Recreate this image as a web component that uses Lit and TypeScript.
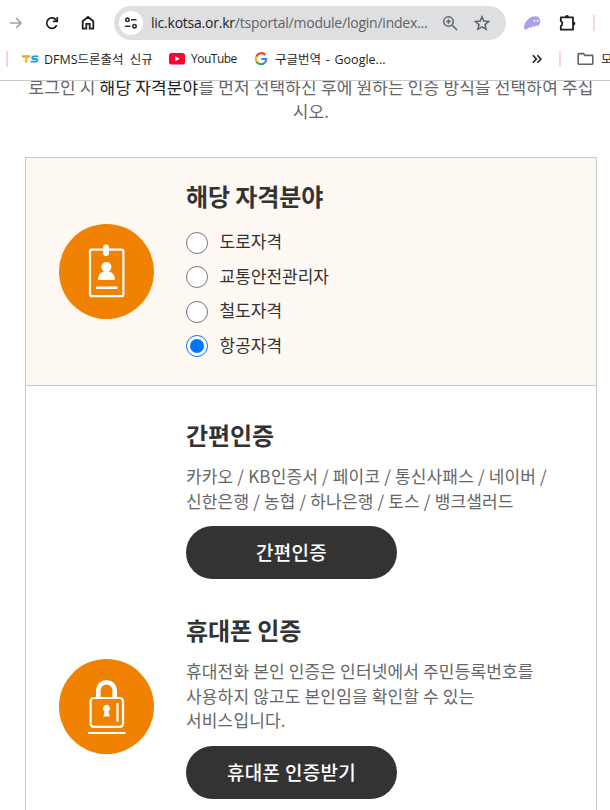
import { LitElement, css, html, svg } from "lit";
import { customElement, property, state } from "lit/decorators.js";

@customElement("browser-bar")
export class BrowserBar extends LitElement {
  static styles = css`
    :host {
      display: block;
      height: 80px;
      flex: none;
      background: #fff;
      border-bottom: 1px solid #c8c9cb;
      font-family: "Open Sans", "Noto Sans CJK KR", sans-serif;
      color: #1f1f1f;
      overflow: hidden;
    }

    svg {
      display: block;
      flex: none;
    }

    .toolbar {
      display: flex;
      align-items: center;
      height: 34px;
      padding: 6px 0 0 6px;
    }

    .forward {
      margin-right: 18px;
    }

    .reload {
      margin-right: 16px;
    }

    .address {
      display: flex;
      align-items: center;
      flex: none;
      box-sizing: border-box;
      width: 392px;
      height: 34px;
      margin: 0 17px 0 14px;
      padding-left: 5px;
      border-radius: 17px;
      background: #dedfe1;
    }

    .site-info {
      display: flex;
      align-items: center;
      justify-content: center;
      width: 24px;
      height: 24px;
      border-radius: 50%;
      background: #fff;
    }

    .url {
      width: 277px;
      margin-left: 8px;
      font-size: 14px;
      line-height: 20px;
      letter-spacing: -0.23px;
      color: #5f6368;
      white-space: nowrap;
    }

    .host {
      color: #1f1f1f;
    }

    .zoom {
      margin: 0 15px 0 14px;
    }

    .puzzle {
      margin: 0 16px 0 17px;
    }

    .divider {
      flex: none;
      width: 2px;
      height: 16px;
      background: #f6d3e5;
    }

    .bookmarks {
      display: flex;
      align-items: center;
      height: 38px;
      padding-left: 6px;
      font-size: 12.5px;
      white-space: nowrap;
    }

    .bookmark {
      display: flex;
      align-items: center;
      flex: none;
      gap: 5px;
    }

    .bookmark span {
      padding-bottom: 2px;
    }

    .ts {
      margin-left: 14px;
      width: 131px;
      word-spacing: 3px;
    }

    .youtube {
      margin-left: 16px;
      width: 69px;
      gap: 6px;
      font-size: 12px;
      letter-spacing: -0.5px;
    }

    .google {
      margin-left: 16px;
      width: 132px;
      gap: 7px;
      word-spacing: 1.5px;
    }

    .more {
      margin: 0 17px 0 146px;
    }

    .folder {
      margin-left: 16px;
      gap: 7px;
    }
  `;

  render() {
    return html`
      <div class="toolbar">
        <svg class="forward" width="20" height="20" viewBox="0 0 20 20" fill="none" stroke="#a3a3a3" stroke-width="1.6">
          <path d="M4 10h11M10 5l5 5-5 5" />
        </svg>
        <svg class="reload" width="16" height="16" viewBox="0 0 16 16" fill="none" stroke="#1f1f1f" stroke-width="1.7">
          <path d="M12.7 10.2a5.2 5.2 0 1 1-.7-5.3l1 1.3" />
          <path d="M13.3 2v4.4H8.9" />
        </svg>
        <svg width="24" height="20" viewBox="0 0 24 20" fill="none" stroke="#1f1f1f" stroke-width="1.8">
          <path d="M6.7 15.6V8.2L12 4l5.3 4.2v7.4h-3.6v-4.8h-3.4v4.8z" />
        </svg>
        <div class="address">
          <div class="site-info">
            <svg width="14" height="14" viewBox="0 0 14 14" fill="none" stroke="#303134" stroke-width="1.6">
              <circle cx="3.4" cy="3.8" r="1.7" />
              <path d="M7 3.8h5.5M1 10.2h5.5" />
              <circle cx="10.5" cy="10.2" r="1.7" />
            </svg>
          </div>
          <div class="url"><span class="host">lic.kotsa.or.kr</span>/tsportal/module/login/index...</div>
          <svg class="zoom" width="16" height="16" viewBox="0 0 16 16" fill="none" stroke="#5f6368" stroke-width="1.5">
            <circle cx="6.5" cy="6.5" r="4.7" />
            <path d="M10 10l5 5M6.5 4.3v4.4M4.3 6.5h4.4" />
          </svg>
          <svg width="18" height="18" viewBox="0 0 18 18" fill="none" stroke="#5f6368" stroke-width="1.5">
            <path d="M9 2.7l1.8 4.4 4.8.4-3.6 3.1 1.1 4.7L9 12.8l-4.1 2.5L6 10.6 2.4 7.5l4.8-.4z" />
          </svg>
        </div>
        <svg width="18" height="16" viewBox="0 0 18 16">
          <path
            fill="#ab9ff2"
            d="M1.3 14.2C.3 11.8 1.6 8.4 3.8 5.5 6 2.7 9 1.2 12.2 1.2c3.2 0 5 1.9 5 4.6 0 2.8-1.2 5.1-2.7 5.1-.7 0-1.1-.3-1.3-.7-.5.9-1.2 1.5-2 1.5-.7 0-1.1-.3-1.3-.7-.6 1-1.4 1.7-2.2 1.7-.7 0-1.1-.3-1.3-.7-1.2 1.8-3.3 3.1-5.1 2.2z"
          />
          <ellipse cx="11.5" cy="5.8" rx=".9" ry="1.1" fill="#fff" />
          <ellipse cx="14.5" cy="5.8" rx=".9" ry="1.1" fill="#fff" />
        </svg>
        <svg class="puzzle" width="19" height="20" viewBox="0 0 19 20">
          <path
            d="M2.8 4.3h12.2v12.4H2.8v-3.6a3 3 0 0 0 0-5.2z"
            fill="none"
            stroke="#1f1f1f"
            stroke-width="1.8"
            stroke-linejoin="round"
          />
          <path d="M7 4a2 2 0 0 1 4 0zM15.4 8.5a2 2 0 0 1 0 4z" fill="#1f1f1f" />
        </svg>
        <div class="divider"></div>
      </div>
      <div class="bookmarks">
        <div class="divider"></div>
        <div class="bookmark ts">
          <svg width="17" height="8" viewBox="0 0 17 8" fill="none" stroke-width="2.2">
            <path d="M0 1.4h8.2" stroke="#f39a1e" />
            <path d="M4.8 1.4L3.9 7.6" stroke="#f7b51c" />
            <path d="M16.4 1.4h-4.4c-2.3 0-2.3 2.6 0 2.6h1.8c2.5 0 2.1 2.6-.4 2.6H8.6" stroke="#1a9fd9" stroke-width="1.9" />
          </svg>
          <span>DFMS드론출석 신규</span>
        </div>
        <div class="bookmark youtube">
          <svg width="16" height="12" viewBox="0 0 16 12">
            <rect width="16" height="11.6" rx="2.6" fill="#f03" />
            <path d="M6.2 3.3v5l4.5-2.5z" fill="#fff" />
          </svg>
          <span>YouTube</span>
        </div>
        <div class="bookmark google">
          <svg width="14" height="14" viewBox="0 0 14 14" fill="none" stroke-width="2.2">
            <path d="M11.3 3.1A5.2 5.2 0 0 0 2.4 4.6" stroke="#ea4335" />
            <path d="M2.4 4.6a5.2 5.2 0 0 0 0 4.8" stroke="#fbbc05" />
            <path d="M2.4 9.4a5.2 5.2 0 0 0 8.1 1.5" stroke="#34a853" />
            <path d="M10.5 10.9A5.2 5.2 0 0 0 12.2 7H7.2" stroke="#4285f4" />
          </svg>
          <span>구글번역 - Google...</span>
        </div>
        <svg class="more" width="10" height="10" viewBox="0 0 10 10" fill="none" stroke="#1f1f1f" stroke-width="1.6">
          <path d="M.8 1.2L4.4 5 .8 8.8M5.4 1.2L9 5 5.4 8.8" />
        </svg>
        <div class="divider"></div>
        <div class="bookmark folder">
          <svg width="17" height="14" viewBox="0 0 17 14" fill="none" stroke="#5f6368" stroke-width="1.6">
            <path d="M1.8 1.6h4.6l1.6 1.8h7.2q.6 0 .6.6v7.6q0 .6-.6.6H1.8q-.6 0-.6-.6V2.2q0-.6.6-.6z" />
          </svg>
          <span>모든</span>
        </div>
      </div>
    `;
  }
}

@customElement("round-icon")
export class RoundIcon extends LitElement {
  static styles = css`
    :host,
    svg {
      display: block;
      width: 95px;
      height: 95px;
    }
  `;

  @property({ type: String })
  name = "card";

  private get glyph() {
    if (this.name === "lock") {
      return svg`
        <path d="M39.3 38V31.5a8.2 8.2 0 0 1 16.4 0V38" stroke-width="4.6" />
        <rect x="31.6" y="39" width="32.4" height="28.8" rx="3.2" stroke-width="2.2" />
        <path d="M29 74h37.5M58.5 44v19" stroke-width="2.2" />
        <path d="M47.5 45.8a3.6 3.6 0 0 0-1.9 6.6l-1.3 5.2h6.4l-1.3-5.2a3.6 3.6 0 0 0-1.9-6.6z" fill="#fff" stroke="none" />
      `;
    }
    return svg`
      <rect x="31" y="25.6" width="33.4" height="46.6" rx="2" stroke-width="2.2" />
      <rect x="44.2" y="20.5" width="5.8" height="11.5" rx="2.6" fill="#fff" stroke="none" />
      <circle cx="47.4" cy="43" r="5" fill="#fff" stroke="none" />
      <path d="M39 56c0-5 2.4-7.6 5.7-8.5h5.4c3.3.9 5.7 3.5 5.7 8.5z" fill="#fff" stroke="none" />
      <path d="M38 63.7h19.5" stroke-width="2.4" stroke-linecap="round" />
    `;
  }

  render() {
    return html`<svg viewBox="0 0 95 95" fill="none" stroke="#fff">
      <circle cx="47.5" cy="47.5" r="47.5" fill="#f18101" stroke="none" />
      ${this.glyph}
    </svg>`;
  }
}

interface AuthMethod {
  title: string;
  icon: string;
  lines: string[];
  button: string;
}

@customElement("app-root")
export class AppRoot extends LitElement {
  static styles = css`
    :host {
      display: flex;
      flex-direction: column;
      width: 610px;
      height: 810px;
      overflow: hidden;
      background: #fff;
      color: #333;
      font-family: "Noto Sans CJK KR", sans-serif;
      font-size: 17px;
    }

    .page {
      flex: 1;
      min-height: 0;
      overflow: hidden;
      padding: 0 13px 0 25px;
    }

    .intro {
      margin: -6px 0 34px;
      line-height: 24px;
      text-align: center;
      color: #666;
      white-space: nowrap;
      letter-spacing: 0.16px;
    }

    .intro strong {
      font-weight: 400;
      color: #222;
    }

    .panel {
      border: 1px solid #c8c8c8;
      height: 800px;
    }

    .row {
      display: grid;
      grid-template-columns: 95px 1fr;
      column-gap: 32px;
      align-items: center;
      padding-left: 33px;
    }

    .field {
      height: 227px;
      background: #fef8f2;
      border-bottom: 1px solid #c8c8c8;
    }

    .methods {
      display: flex;
      flex-direction: column;
      gap: 33px;
      padding-top: 31px;
    }

    .methods round-icon {
      margin-top: 2px;
    }

    h2 {
      margin: 0;
      font-size: 24px;
      font-weight: 700;
      line-height: 36px;
      letter-spacing: -0.1px;
    }

    .field h2 {
      margin-top: -1px;
    }

    .options {
      display: flex;
      flex-direction: column;
      margin-top: 11px;
    }

    .option {
      display: flex;
      align-items: center;
      gap: 11.5px;
      height: 34.6px;
      cursor: pointer;
    }

    .radio {
      display: flex;
      align-items: center;
      justify-content: center;
      box-sizing: border-box;
      width: 22px;
      height: 22px;
      border: 1px solid #767676;
      border-radius: 50%;
      background: #fff;
    }

    .checked .radio {
      border: 1.5px solid #0075ff;
    }

    .checked .radio::before {
      content: "";
      width: 14px;
      height: 14px;
      border-radius: 50%;
      background: #0075ff;
    }

    .label {
      line-height: 24px;
      padding-bottom: 3px;
    }

    .text {
      margin: 11px 0 13px;
      line-height: 24.5px;
      color: #666;
      white-space: nowrap;
      letter-spacing: 0.16px;
    }

    .button {
      display: block;
      width: 211px;
      height: 53px;
      padding: 0 0 2px;
      border: 0;
      border-radius: 27px;
      background: #333;
      color: #fff;
      font: 500 19px "Noto Sans CJK KR", sans-serif;
      letter-spacing: 0.3px;
      cursor: pointer;
    }
  `;

  @property({ type: Array })
  options = ["도로자격", "교통안전관리자", "철도자격", "항공자격"];

  @property({ type: Array })
  methods: AuthMethod[] = [
    {
      title: "간편인증",
      icon: "",
      lines: [
        "카카오 / KB인증서 / 페이코 / 통신사패스 / 네이버 /",
        "신한은행 / 농협 / 하나은행 / 토스 / 뱅크샐러드",
      ],
      button: "간편인증",
    },
    {
      title: "휴대폰 인증",
      icon: "lock",
      lines: [
        "휴대전화 본인 인증은 인터넷에서 주민등록번호를",
        "사용하지 않고도 본인임을 확인할 수 있는",
        "서비스입니다.",
      ],
      button: "휴대폰 인증받기",
    },
  ];

  @state()
  private selected = "항공자격";

  private renderOption(option: string) {
    const checked = option === this.selected;
    return html`<div
      class="option ${checked ? "checked" : ""}"
      role="radio"
      aria-checked=${checked}
      @click=${() => (this.selected = option)}
    >
      <span class="radio"></span>
      <span class="label">${option}</span>
    </div>`;
  }

  private renderMethod(method: AuthMethod) {
    return html`<div class="row">
      ${method.icon
        ? html`<round-icon name=${method.icon}></round-icon>`
        : html`<span></span>`}
      <div>
        <h2>${method.title}</h2>
        <div class="text">
          ${method.lines.map((line) => html`<div>${line}</div>`)}
        </div>
        <button class="button">${method.button}</button>
      </div>
    </div>`;
  }

  render() {
    return html`
      <browser-bar></browser-bar>
      <div class="page">
        <p class="intro">
          로그인 시 <strong>해당 자격분야</strong>를 먼저 선택하신 후에 원하는 인증 방식을 선택하여 주십<br />시오.
        </p>
        <div class="panel">
          <div class="row field">
            <round-icon name="card"></round-icon>
            <div>
              <h2>해당 자격분야</h2>
              <div class="options" role="radiogroup">
                ${this.options.map((option) => this.renderOption(option))}
              </div>
            </div>
          </div>
          <div class="methods">
            ${this.methods.map((method) => this.renderMethod(method))}
          </div>
        </div>
      </div>
    `;
  }
}
